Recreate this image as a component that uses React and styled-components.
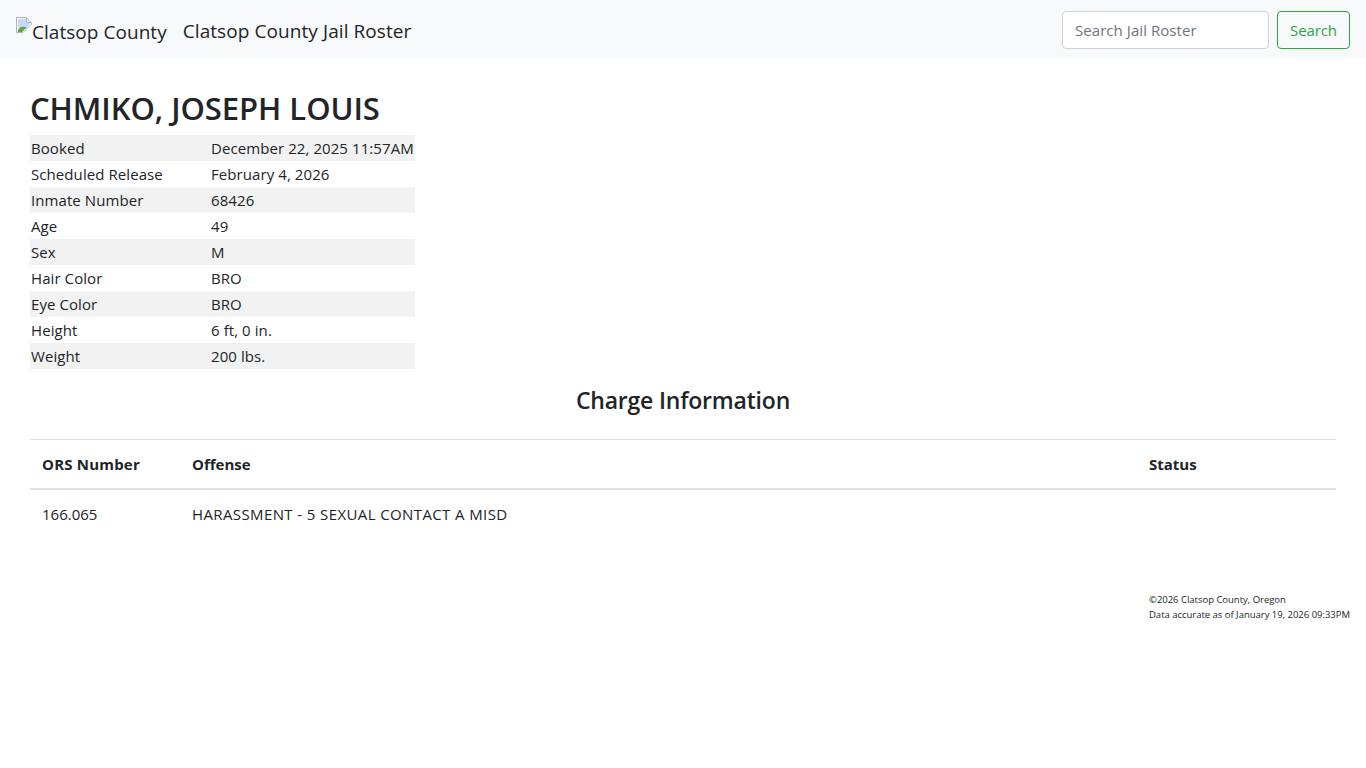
import React from "react";
import styled, { createGlobalStyle } from "styled-components";

const GlobalStyle = createGlobalStyle`
  * { box-sizing: border-box; }
  body {
    margin: 0;
    background: #fff;
    color: #212529;
    font-family: "Open Sans", "Noto Sans", sans-serif;
    font-size: 15px;
    line-height: 24px;
  }
`;

const Navbar = styled.nav`
  height: 58px;
  background: #f8f9fa;
  padding: 2px 16px 0;
  display: flex;
  align-items: center;
  justify-content: space-between;
`;

const Brand = styled.div`
  display: flex;
  align-items: flex-start;
  margin-top: 2px;
  font-size: 19px;
  line-height: 30px;
  letter-spacing: 0.08px;
`;

const BrokenImage = styled.span`
  display: flex;
  align-items: flex-start;
  margin-right: 16px;
  padding-top: 1px;
  letter-spacing: 0.04px;
`;

const BrokenIcon = styled.svg`
  width: 16px;
  height: 16px;
`;

const SearchForm = styled.form`
  display: flex;
  gap: 8px;
`;

const SearchInput = styled.input`
  width: 207px;
  height: 38px;
  padding: 6px 12px;
  border: 1px solid #ced4da;
  border-radius: 4px;
  background: #fff;
  font: inherit;
  font-size: 15px;
  letter-spacing: 0.06px;
  &::placeholder {
    color: #6c757d;
    opacity: 1;
  }
`;

const SearchButton = styled.button`
  width: 73px;
  height: 38px;
  padding: 0;
  border: 1px solid #28a745;
  border-radius: 4px;
  background: transparent;
  color: #28a745;
  font: inherit;
  font-size: 15px;
  letter-spacing: -0.1px;
`;

const Content = styled.main`
  padding: 31px 30px 0;
`;

const Name = styled.h1`
  margin: 0 0 8px;
  font-size: 31px;
  line-height: 38px;
  font-weight: 600;
  letter-spacing: -0.05px;
`;

const InfoTable = styled.table`
  width: 385px;
  border-collapse: collapse;
  letter-spacing: 0.08px;
`;

const InfoRow = styled.tr`
  height: 26px;
  background: ${(p) => (p.$odd ? "#f2f2f2" : "transparent")};
`;

const InfoLabel = styled.td`
  width: 180px;
  padding: 1px;
`;

const InfoValue = styled.td`
  padding: 1px;
  white-space: nowrap;
`;

const SectionTitle = styled.h4`
  margin: 17px 0 24px;
  font-size: 23px;
  line-height: 29px;
  font-weight: 600;
  text-align: center;
  letter-spacing: -0.2px;
`;

const ChargeTable = styled.table`
  width: 100%;
  border-collapse: collapse;
  table-layout: fixed;
`;

const HeadCell = styled.th`
  width: ${(p) => p.$width || "auto"};
  padding: 12px;
  border-top: 1px solid #dee2e6;
  border-bottom: 2px solid #dee2e6;
  text-align: left;
  font-weight: 700;
  letter-spacing: ${(p) => p.$tracking || "0"};
`;

const Cell = styled.td`
  height: 50px;
  padding: 11px 12px 13px;
  letter-spacing: ${(p) => p.$tracking || "0"};
`;

const Footer = styled.footer`
  margin: 53px 16px 0 auto;
  width: 201px;
  font-size: 9.5px;
  line-height: 15px;
  letter-spacing: -0.02px;
  white-space: nowrap;
`;

const rows = [
  ["Booked", "December 22, 2025 11:57AM"],
  ["Scheduled Release", "February 4, 2026"],
  ["Inmate Number", "68426"],
  ["Age", "49"],
  ["Sex", "M"],
  ["Hair Color", "BRO"],
  ["Eye Color", "BRO"],
  ["Height", "6 ft, 0 in."],
  ["Weight", "200 lbs."],
];

const App = () => {
  return (
    <>
      <GlobalStyle />
      <Navbar>
        <Brand>
          <BrokenImage>
            <BrokenIcon viewBox="0 0 16 16">
              <path d="M0.5 0.5H10.5L15.5 5.5V7L7 15.5H0.5Z" fill="#fff" stroke="#b0b5bb" />
              <path d="M2 2H10V6H14V7L9 12H2Z" fill="#c6daf5" />
              <path d="M2 13C4 10 6 9 8 10L11 10L6 15H2Z" fill="#5aa845" />
              <path d="M10.5 0.5V5.5H15.5" fill="#e6e8eb" stroke="#b0b5bb" />
            </BrokenIcon>
            Clatsop County
          </BrokenImage>
          Clatsop County Jail Roster
        </Brand>
        <SearchForm onSubmit={(e) => e.preventDefault()}>
          <SearchInput placeholder="Search Jail Roster" />
          <SearchButton>Search</SearchButton>
        </SearchForm>
      </Navbar>
      <Content>
        <Name>CHMIKO, JOSEPH LOUIS</Name>
        <InfoTable>
          <tbody>
            {rows.map((r, i) => (
              <InfoRow key={r[0]} $odd={i % 2 === 0}>
                <InfoLabel>{r[0]}</InfoLabel>
                <InfoValue>{r[1]}</InfoValue>
              </InfoRow>
            ))}
          </tbody>
        </InfoTable>
        <SectionTitle>Charge Information</SectionTitle>
        <ChargeTable>
          <thead>
            <tr>
              <HeadCell $width="150px" $tracking="0.2px">ORS Number</HeadCell>
              <HeadCell>Offense</HeadCell>
              <HeadCell $width="199px">Status</HeadCell>
            </tr>
          </thead>
          <tbody>
            <tr>
              <Cell>166.065</Cell>
              <Cell $tracking="0.39px">HARASSMENT - 5 SEXUAL CONTACT A MISD</Cell>
              <Cell />
            </tr>
          </tbody>
        </ChargeTable>
      </Content>
      <Footer>
        ©2026 Clatsop County, Oregon
        <br />
        Data accurate as of January 19, 2026 09:33PM
      </Footer>
    </>
  );
};

export default App;
